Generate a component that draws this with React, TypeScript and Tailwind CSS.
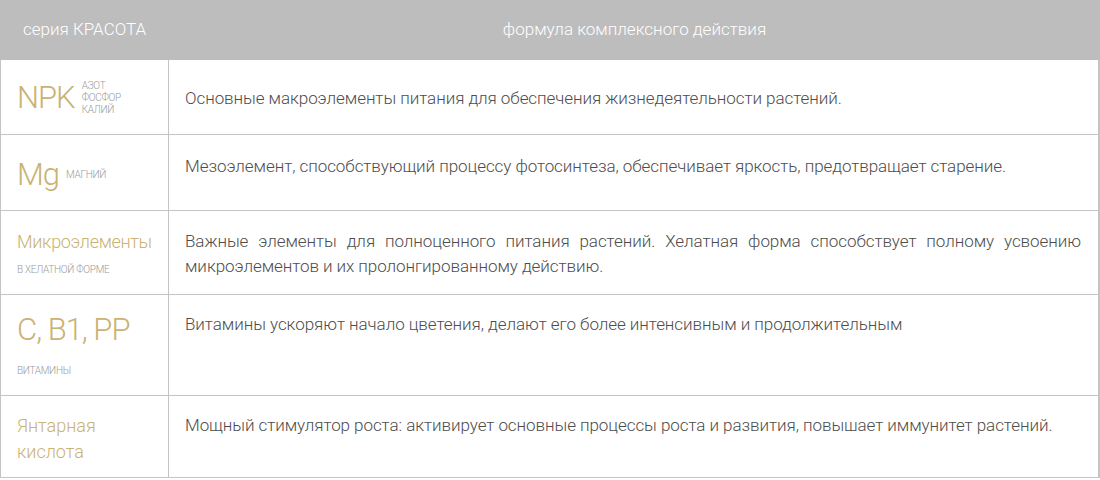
const gold = 'text-[#c9b273]'
const note = 'text-[#9a9a9a] text-[10px] uppercase tracking-[-0.3px]'

function Row({ left, children, className }: { left: React.ReactNode; children: React.ReactNode; className: string }) {
  return (
    <div className={`flex border-b border-[#c4c4c4] ${className}`}>
      <div className="w-[168px] shrink-0 border-r border-[#c4c4c4] pl-[16px]">{left}</div>
      <div className="flex-1 pl-[16px] pr-[17px] text-[17px] leading-[25px] tracking-[-0.06px] text-[#4d4d4d] text-justify">{children}</div>
    </div>
  )
}

export default function App() {
  return (
    <div className="w-[1100px] h-[480px] bg-white font-['Roboto',sans-serif] font-light">
      <div className="flex h-[60px] bg-[#bdbdbd] text-white text-[17px] items-center">
        <div className="w-[169px] pl-[23px]">серия КРАСОТА</div>
        <div className="flex-1 text-center">формула комплексного действия</div>
      </div>
      <div className="border-l border-r-2 border-[#c4c4c4] w-[1100px]">
        <Row className="h-[75px]" left={
          <div className="flex items-center gap-[7px] pt-[18px]">
            <span className={`${gold} text-[31px] leading-[40px] tracking-[-1px]`}>NPK</span>
            <span className={`${note} leading-[12px]`}>Азот<br />фосфор<br />калий</span>
          </div>
        }>
          <p className="pt-[26px]">Основные макроэлементы питания для обеспечения жизнедеятельности растений.</p>
        </Row>
        <Row className="h-[76px]" left={
          <div className="flex items-center gap-[7px] pt-[20px]">
            <span className={`${gold} text-[31px] leading-[40px] tracking-[-1px]`}>Mg</span>
            <span className={`${note} leading-[12px]`}>Магний</span>
          </div>
        }>
          <p className="pt-[19px]">Мезоэлемент, способствующий процессу фотосинтеза, обеспечивает яркость, предотвращает старение.</p>
        </Row>
        <Row className="h-[84px]" left={
          <div className="pt-[19px]">
            <div className={`${gold} text-[18px] leading-[24px] tracking-[-0.3px]`}>Микроэлементы</div>
            <div className={`${note} leading-[12px] mt-[10px]`}>в хелатной форме</div>
          </div>
        }>
          <p className="pt-[18px]">Важные элементы для полноценного питания растений. Хелатная форма способствует полному усвоению микроэлементов и их пролонгированному действию.</p>
        </Row>
        <Row className="h-[101px]" left={
          <div className="pt-[15px]">
            <div className={`${gold} text-[31px] leading-[40px] tracking-[-1px]`}>C, B1, PP</div>
            <div className={`${note} leading-[12px] mt-[15px]`}>витамины</div>
          </div>
        }>
          <p className="pt-[17px]">Витамины ускоряют начало цветения, делают его более интенсивным и продолжительным</p>
        </Row>
        <Row className="h-[82px]" left={
          <div className={`${gold} text-[18px] leading-[26px] pt-[17px]`}>Янтарная<br />кислота</div>
        }>
          <p className="pt-[17px]">Мощный стимулятор роста: активирует основные процессы роста и развития, повышает иммунитет растений.</p>
        </Row>
      </div>
    </div>
  )
}
